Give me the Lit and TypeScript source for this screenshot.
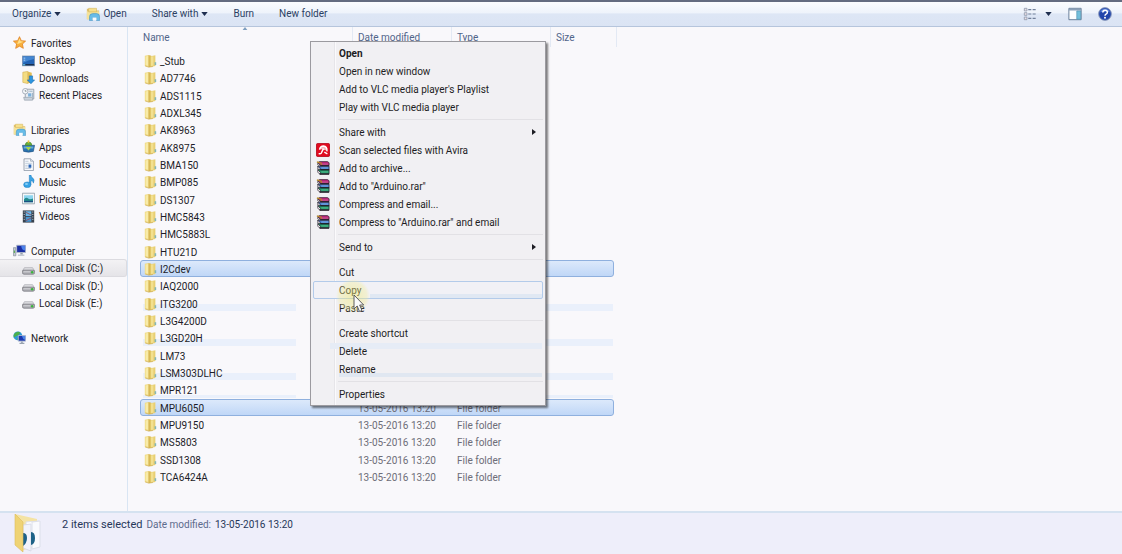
import { LitElement, html, svg, css, nothing, TemplateResult } from "lit";
import { customElement, property, state } from "lit/decorators.js";
import { classMap } from "lit/directives/class-map.js";

const folder = svg`<path d="M1 1.500L6 .5v15l-5-1.500z" fill="#f0da85"/><path d="M2 2.500l3-.8v12l-3-.7z" fill="#f8eba8"/><path d="M5.500 .5l3.500 1v13.500l-3.500 .7z" fill="#d9ba55"/><path d="M8 2l6-1v13l-6 1.500z" fill="#e8cf73"/><path d="M8.500 2.500l3-.5v11.500l-3 .7z" fill="#f2e090"/><path d="M13 9.500h2v3.500h-2z" fill="#86b6b4"/><path d="M1.500 14.200l4.500 1.300 5-.7" stroke="#cdaa4c" stroke-width=".8" fill="none"/>`;
const disk = svg`<path d="M3 7h10l2.500 4H.5z" fill="#e0e0e4" stroke="#9a9aa2" stroke-width=".7"/><rect x=".5" y="10" width="15" height="5" rx="2" fill="#b0b0b6" stroke="#74747c" stroke-width=".9"/><path d="M2 12h8" stroke="#d8d8dc"/><circle cx="12.500" cy="12.500" r="1.500" fill="#39b53c"/>`;
const library = svg`<path d="M1 2h5l1 2h8v10H1z" fill="#dfc070"/><path d="M1 5h14v9H1z" fill="#f4e29a"/><path d="M3 1.500h9v4H3z" fill="#f6e08c" stroke="#d2b055" stroke-width=".6"/><path d="M4 15.500V11q0-3.500 4-3.500h4q3.500 0 3.500 3.500v4.500h-3.500v-3H7.500v3z" fill="#68bce8" stroke="#3a8cc0" stroke-width=".6"/><path d="M7.500 12h4.500v3H7.500z" fill="#f7fbff"/>`;
const books = svg`<g stroke="#231c28" stroke-width=".7"><path d="M2 2l2-1.500h9l2 1.500v3H5z" fill="#b02372"/><path d="M2 2l3 3v1L2 4.500z" fill="#f4f0f4"/><path d="M2 6l3 0h10v4H5z" fill="#3f73c4"/><path d="M2 6l3 3v1.500L2 9z" fill="#f4f0f4"/><path d="M2 10h13v4.500H5z" fill="#1f9466"/><path d="M2 10l3 3v2L2 13z" fill="#f4f0f4"/></g><path d="M6 3.500h8" stroke="#dc6ba8"/><path d="M6 8h8" stroke="#8cc1f0"/><path d="M6 12.500h8" stroke="#62c99a"/><path d="M1 1l5 1.500v2" stroke="#b88b26" stroke-width="1.200" fill="none"/><path d="M5 5.500h10M5 10h10M4 15h11" stroke="#1c1720" stroke-width="1.200"/>`;

const ICONS: Record<string, TemplateResult> = {
  folder, disk, library, books,
  star: svg`<path d="M8 .8l2.200 4.900 5.300.6-3.900 3.600 1.100 5.300L8 12.500l-4.700 2.700 1.100-5.300L.5 6.300l5.300-.6z" fill="#f8b03c" stroke="#e07d1e" stroke-width=".9"/><path d="M8 3l1.300 3.600L13 7.200 9 8.500 5 10z" fill="#ffe08b"/>`,
  desktop: svg`<rect x=".5" y="2.500" width="15" height="12" fill="#2363b4" stroke="#8094ae"/><path d="M1 3h14v3Q8 7 1 11z" fill="#4386d2"/><path d="M1 12.500h14v1.500H1z" fill="#18283f"/><path d="M2 4.500h2v1H2zM2 7h2v1H2z" fill="#cfe5fa"/><path d="M1 12.500h3v1.500H1z" fill="#62c2e6"/>`,
  downloads: svg`<path d="M1 1.500l6-1v15l-6-1.500z" fill="#f3dc82" stroke="#d2ac46" stroke-width=".7"/><path d="M7 .5l5 1.500v12l-5 1.500z" fill="#e2bd55"/><path d="M9 6h4v5h2.500L11 15.700 6.500 11H9z" fill="#2d95e0" stroke="#1668ab" stroke-width=".7"/>`,
  recent: svg`<path d="M4 1.500h10.500v12H4z" fill="#e9edf2" stroke="#8c96a3"/><path d="M2 11.500h11v3.500H3z" fill="#cbd3dc" stroke="#8c96a3" stroke-width=".7"/><circle cx="4" cy="4" r="3.400" fill="#f5f7fa" stroke="#9aa3b0"/><path d="M4 2.500V4h1.500" stroke="#566" fill="none" stroke-width=".8"/><path d="M7.500 6.500h4v4h-4z" fill="#7cb0da"/><path d="M9 4h4M13 6v5" stroke="#8aa5bf"/>`,
  apps: svg`<path d="M.5 6.500h15l-1.500 7.500q-6 2-12 0z" fill="#2b72ae" stroke="#1e4d7d" stroke-width=".7"/><path d="M2 8h12v2.500H2z" fill="#62a9dc"/><path d="M4 6.500q0-4 4-4t4 4z" fill="#6cb33e" stroke="#3d7b24" stroke-width=".7"/><path d="M4.500 8.500h7L8 13z" fill="#a5d64c"/><path d="M7 .5h2v3H7z" fill="#e9c33c"/>`,
  documents: svg`<path d="M2.500 1h8l3.500 3v11.500h-11.500z" fill="#fbfcfe" stroke="#8793a3"/><path d="M10.500 1v3H14" fill="#dbe3ec" stroke="#8793a3" stroke-width=".7"/><path d="M4 4h4M4 6.500h8M4 9h3M4 11h3M4 13h7" stroke="#9fb1c6" stroke-width=".8"/><path d="M8 8h3.500v4H8z" fill="#2b66b6"/>`,
  music: svg`<path d="M9 0h2q0 2.500 2.500 4T14 10q0-3-3-3v5H9z" fill="#3ca3e3" stroke="#1b78bd" stroke-width=".6"/><ellipse cx="6.500" cy="12" rx="4.500" ry="3.500" fill="#36a3e6" stroke="#1b78bd" stroke-width=".6"/><ellipse cx="5.500" cy="11" rx="2" ry="1" fill="#a5dcfa"/>`,
  pictures: svg`<path d="M.5 1.500h15v13H.5z" fill="#f4f6f8" stroke="#8f9ba8"/><path d="M2.500 4h11v8.500h-11z" fill="#8cd4ef"/><path d="M2.500 9q3-3 5-1t6 0v4.500h-11z" fill="#238a8c"/><path d="M2.500 11h11v1.500h-11z" fill="#1b4f83"/>`,
  videos: svg`<path d="M1 .5h14v15H1z" fill="#39414d"/><path d="M4.500 1.500h7v6h-7z" fill="#6ab5e6"/><path d="M4.500 8.500h7v6h-7z" fill="#4b93cc"/><path d="M5 3l6 3M5 13l6-3" stroke="#a34345"/><path d="M2 2.500h1.500M2 5.500h1.500M2 8.500h1.500M2 11.500h1.500M12.500 2.500H14M12.500 5.500H14M12.500 8.500H14M12.500 11.500H14" stroke="#b9c4cf" stroke-width="1.100"/>`,
  computer: svg`<path d="M.5 4.500h3v10h-3z" fill="#c4cad2" stroke="#7d8896" stroke-width=".8"/><path d="M1 8h1.500v3H1z" fill="#5fae5a"/><path d="M4.500 1.500h11v9h-11z" fill="#1b2fa3" stroke="#b7bfca"/><path d="M10 2h5v6q-4 0-5-6z" fill="#4b80ea"/><path d="M9 11h3v2H9z" fill="#98a1ae"/><path d="M6 13h8v1.500H6z" fill="#b5bcc7"/>`,
  network: svg`<circle cx="6" cy="6" r="5.500" fill="#2f9bd6"/><path d="M3 2q4-2 6 0L7 5 4 6 1 8Q0 4 3 2zM5 8l3 2-2 1.500z" fill="#4cb04b"/><path d="M6.500 5.500h9v7h-9z" fill="#1b37b0" stroke="#b9c3d0"/><path d="M11 6h4v5q-3-1-4-5z" fill="#4c83e6"/><path d="M10 13h2v1.500h2V16H8v-1.500h2z" fill="#99a3af"/>`,
  views: svg`<path d="M1.500 1.500h3v3h-3zM1.500 6.500h3v3h-3zM1.500 11.500h3v3h-3z" fill="#eadfe4" stroke="#8c98ab" stroke-width=".9"/><path d="M6 3h3.500M11 3h3.500M6 8h3.500M11 8h3.500M6 13h3.500M11 13h3.500" stroke="#71809a" stroke-width="1.200"/>`,
  pane: svg`<path d="M1 1.500h14v13H1z" fill="#fdfeff" stroke="#58708e"/><path d="M1 2h14v2H1z" fill="#8ba0b8"/><path d="M10 4.500h4.500V14H10z" fill="#73bfdb" stroke="#4a8fb0" stroke-width=".7"/>`,
  help: svg`<circle cx="8" cy="8" r="7.300" fill="#2145ab" stroke="#8d9cba"/><path d="M2.500 6q1-4 5.500-4t5.500 4q-5-2-11 0z" fill="#5c84da"/><path d="M5.500 6.200q0-2.600 2.600-2.600t2.600 2.300q0 1.500-1.500 2.200-1.200.6-1.200 1.900" fill="none" stroke="#fff" stroke-width="1.700"/><circle cx="8" cy="12.300" r="1.100" fill="#fff"/>`,
  avira: svg`<rect x=".5" y=".5" width="15" height="15" rx="1.500" fill="#e10b20" stroke="#b50a1c"/><path d="M4 7.500Q5 3.500 8.500 3.500q4 .5 3.800 5.500-1.500-1.500-3.500-1-2-1.500-4.800-.5z" fill="#f7b4ba"/><path d="M4 7.500Q5 3.500 8.500 3.500q4.500 .5 4 6" fill="none" stroke="#fff" stroke-width="1.600"/><path d="M8.500 6.500L6 11.500q-.7 1-3 .7" stroke="#fff" stroke-width="1.600" fill="none"/><path d="M9.500 10.500l3.500 2" stroke="#fff" stroke-width="1.500"/>`,
};

const icon = (name: string) =>
  html`<svg class="icon" viewBox="0 0 16 16" aria-hidden="true">${ICONS[name]}</svg>`;

const arrow = html`<svg class="caret" viewBox="0 0 8 5" aria-hidden="true"><path d="M0 0h8L4 5z" /></svg>`;

const label = css`.label { padding-top: 2px; }`;

@customElement("command-bar")
class CommandBar extends LitElement {
  static styles = css`
    :host { display: block; }
    .bar {
      display: flex; align-items: center; height: 24px; padding: 0 6px 0 8px;
      border-top: 2px solid #646c80; border-bottom: 1px solid #b6c5dc;
      background: linear-gradient(#fbfcfe, #eef3fb 45%, #dde6f5 50%, #dbe4f4);
    }
    button {
      display: flex; align-items: center; gap: 3px; height: 22px; padding: 0 4px; margin: 0;
      border: 0; background: none; font: 10px/14px Roboto, "Open Sans", sans-serif; color: #2c3f63;
    }
    .group { display: flex; gap: 17px; }
    .tools { display: flex; margin-left: auto; align-items: center; gap: 8px; }
    .views { gap: 8px; }
    .icon { width: 14px; height: 14px; }
    .caret { width: 7px; height: 4px; fill: #1f2f50; }
  `;
  render() {
    return html`<div class="bar" role="toolbar" aria-label="Folder commands">
      <div class="group">
        <button>Organize ${arrow}</button>
        <button>${icon("library")}Open</button>
        <button>Share with ${arrow}</button>
        <button>Burn</button>
        <button>New folder</button>
      </div>
      <div class="tools">
        <button class="views" aria-label="Change your view">${icon("views")}${arrow}</button>
        <button aria-label="Show the preview pane">${icon("pane")}</button>
        <button aria-label="Help">${icon("help")}</button>
      </div>
    </div>`;
  }
}

type NavNode = { label: string; icon: string; children?: NavNode[] };
const NAV: NavNode[] = [
  { label: "Favorites", icon: "star", children: [
    { label: "Desktop", icon: "desktop" }, { label: "Downloads", icon: "downloads" }, { label: "Recent Places", icon: "recent" } ] },
  { label: "Libraries", icon: "library", children: [
    { label: "Apps", icon: "apps" }, { label: "Documents", icon: "documents" }, { label: "Music", icon: "music" },
    { label: "Pictures", icon: "pictures" }, { label: "Videos", icon: "videos" } ] },
  { label: "Computer", icon: "computer", children: [
    { label: "Local Disk (C:)", icon: "disk" }, { label: "Local Disk (D:)", icon: "disk" }, { label: "Local Disk (E:)", icon: "disk" } ] },
  { label: "Network", icon: "network" },
];

@customElement("nav-pane")
class NavPane extends LitElement {
  @property() current = "Local Disk (C:)";
  static styles = [label, css`
    :host { display: block; border-right: 1px solid #d9e5f3; padding-top: 7px; }
    nav { display: grid; grid-auto-rows: 17px 18px 17px; }
    a {
      display: flex; align-items: center; gap: 5px; padding-left: 13px; border: 1px solid transparent;
      border-left: 0; border-radius: 0 3px 3px 0; color: #1d1d28; text-decoration: none; white-space: nowrap;
    }
    .child { padding-left: 22px; gap: 4px; }
    .current { background: linear-gradient(#f3f2f4, #e5e4e8); border-color: #dcdbe0; }
    .icon { width: 13px; height: 13px; flex: none; }
  `];
  private link(n: NavNode, child: boolean) {
    return html`<a href="#" class=${classMap({ child, current: n.label === this.current })}>${icon(n.icon)}<span class="label">${n.label}</span></a>`;
  }
  render() {
    return html`<nav aria-label="Places">
      ${NAV.map((n, i) => html`${i ? html`<span></span>` : nothing}${this.link(n, false)}${(n.children ?? []).map((c) => this.link(c, true))}`)}
    </nav>`;
  }
}

const NAMES = ["_Stub", "AD7746", "ADS1115", "ADXL345", "AK8963", "AK8975", "BMA150", "BMP085", "DS1307", "HMC5843",
  "HMC5883L", "HTU21D", "I2Cdev", "IAQ2000", "ITG3200", "L3G4200D", "L3GD20H", "LM73", "LSM303DLHC", "MPR121",
  "MPU6050", "MPU9150", "MS5803", "SSD1308", "TCA6424A"];
const TRACES = ["ITG3200", "L3GD20H", "LSM303DLHC"];

@customElement("file-list")
class FileList extends LitElement {
  @state() private selected = new Set(["I2Cdev", "MPU6050"]);
  static styles = [label, css`
    :host { display: block; padding-left: 12px; }
    table { display: block; width: 477px; max-width: 100%; }
    thead, tbody, tr { display: grid; }
    tr { grid-template-columns: 213px 99px 99px 1fr; }
    th, td { display: flex; align-items: center; padding: 0; font-weight: 400; text-align: left; white-space: nowrap; }
    th { color: #51658a; height: 20px; padding-left: 5px; border-right: 1px solid #e3e9f4; box-sizing: border-box; }
    .sorted { position: relative; padding-left: 3px; }
    .sorted .caret { position: absolute; top: 0; left: 102px; width: 6px; height: 3px; fill: #7f9fc0; transform: rotate(180deg); }
    tbody { grid-auto-rows: 17px 18px 17px; padding-top: 5px; }
    tbody tr { margin-right: 3px; border: 1px solid transparent; border-radius: 3px; }
    td { color: #6d6d78; padding-left: 4px; }
    .name { color: #1d1d28; padding-left: 3px; gap: 3px; }
    .icon { width: 13px; height: 14px; flex: none; }
    .selected { border-color: #8fb0de; background: linear-gradient(#dce9fb, #c0d7f7); }
    .trace {
      background: linear-gradient(#eaf0fb, #eaf0fb) 2px 100% / 153px 7px no-repeat,
        linear-gradient(#eaf0fb, #eaf0fb) 100% 100% / 80px 7px no-repeat;
    }
    .trace.thin { background-size: 153px 3px, 80px 3px; }
  `];
  render() {
    return html`<table>
      <thead><tr>
        <th class="sorted"><span class="label">Name</span>${arrow}</th>
        ${["Date modified", "Type", "Size"].map((h) => html`<th><span class="label">${h}</span></th>`)}
      </tr></thead>
      <tbody>${NAMES.map((n) => html`<tr class=${classMap({
        selected: this.selected.has(n), trace: TRACES.includes(n) || n === "MPR121", thin: n === "MPR121" })}>
        <td class="name">${icon("folder")}<span class="label">${n}</span></td>
        <td><span class="label">13-05-2016 13:20</span></td>
        <td><span class="label">File folder</span></td><td></td></tr>`)}</tbody>
    </table>`;
  }
}

type Item = { label: string; icon?: string; bold?: boolean; sub?: boolean; hot?: boolean; tint?: string };
const MENU: Item[][] = [
  [{ label: "Open", bold: true }, { label: "Open in new window" }, { label: "Add to VLC media player's Playlist" }, { label: "Play with VLC media player" }],
  [{ label: "Share with", sub: true }, { label: "Scan selected files with Avira", icon: "avira" }, { label: "Add to archive...", icon: "books" },
    { label: 'Add to "Arduino.rar"', icon: "books" }, { label: "Compress and email...", icon: "books" }, { label: 'Compress to "Arduino.rar" and email', icon: "books" }],
  [{ label: "Send to", sub: true }],
  [{ label: "Cut" }, { label: "Copy", hot: true }, { label: "Paste" }],
  [{ label: "Create shortcut" }, { label: "Delete", tint: "high" }, { label: "Rename", tint: "low" }],
  [{ label: "Properties" }],
];

@customElement("context-menu")
class ContextMenu extends LitElement {
  static styles = [label, css`
    :host { display: block; }
    .menu {
      padding: 2px; border: 1px solid #9b9a9f; box-shadow: 2px 2px 2px #00000080;
      background: linear-gradient(90deg, transparent 23px, #e6e5e9 23px, #e6e5e9 24px, #fbfafc 24px, #fbfafc 25px, transparent 25px), #f1f0f3;
    }
    .group + .group { margin-top: 3px; padding-top: 3px; border-top: 1px solid transparent; border-image: linear-gradient(90deg, transparent 26px, #e2e1e5 26px) 1; }
    button {
      display: grid; grid-template-columns: 25px 1fr 6px; align-items: center; width: 100%; height: 18px; margin: 0; padding: 0 4px 0 0;
      border: 1px solid transparent; border-radius: 2px; background: none; font: 10px/14px Roboto, "Open Sans", sans-serif;
      color: #1d1d24; text-align: left; white-space: nowrap;
    }
    .bold { font-weight: 700; }
    .hot { border-color: #b3cbea; background: linear-gradient(#e0e8f3, #e0e8f3) 100% 100% / 172px 4px no-repeat, #f1f1f6; }
    .high { background: linear-gradient(#e6ecf6, #e6ecf6) 100% 0 / 212px 6px no-repeat; }
    .low { background: linear-gradient(#e0e7f1, #e0e7f1) 100% 100% / 203px 4px no-repeat; }
    .icon { width: 14px; height: 14px; margin-left: 2px; }
    .more { width: 4px; height: 6px; fill: #1d1d24; }
  `];
  render() {
    return html`<div class="menu" role="menu">${MENU.map((g) => html`<div class="group" role="group">${g.map((i) => html`
      <button role="menuitem" class="${classMap({ bold: !!i.bold, hot: !!i.hot, high: i.tint === "high", low: i.tint === "low" })}">
        ${i.icon ? icon(i.icon) : html`<span></span>`}<span class="label">${i.label}</span>
        ${i.sub ? html`<svg class="more" viewBox="0 0 4 6" aria-hidden="true"><path d="M0 0l4 3-4 3z" /></svg>` : nothing}
      </button>`)}</div>`)}</div>`;
  }
}

@customElement("details-bar")
class DetailsBar extends LitElement {
  static styles = css`
    :host { display: block; }
    .bar { display: flex; align-items: flex-start; gap: 16px; height: 41px; padding-left: 14px; border-top: 2px solid #d5e2f0; background: #eeeefa; }
    .thumb { width: 32px; height: 40px; }
    p { display: flex; align-items: baseline; gap: 4px; margin: 4px 0 0; color: #5d6b8c; line-height: 16px; white-space: nowrap; }
    .count, .value { color: #263759; }
    .count { font-size: 11px; }
  `;
  render() {
    return html`<footer class="bar">
      <svg class="thumb" viewBox="0 0 32 40" aria-hidden="true">
        <path d="M1 1l22 5v26l-16 6z" fill="#f4e3a4" /><path d="M12 9l13-1v25l-12 2z" fill="#fff" stroke="#dfe1ea" />
        <path d="M9 12l8-1v27l-8-3z" fill="#f1f3fa" stroke="#d9dce8" /><path d="M18 9l8-1v26l-8 2z" fill="#f9fafd" stroke="#dcdfe9" />
        <path d="M9 20q4 0 4 5t-4 8z" fill="#1e6287" /><path d="M17 19q4 0 4 6t-4 7z" fill="#1e6287" />
        <path d="M1 1l8 8v30l-8-7z" fill="#efd374" stroke="#dcbc5c" stroke-width=".6" />
      </svg>
      <p><span class="count">2 items selected</span><span>Date modified:</span><span class="value">13-05-2016 13:20</span></p>
    </footer>`;
  }
}

@customElement("app-root")
class AppRoot extends LitElement {
  static styles = css`
    :host {
      display: grid; grid-template-rows: auto 1fr auto; position: relative; min-height: 100vh; overflow: hidden;
      background: #f9f8fb; color: #1d1d28; font: 10px/14px Roboto, "Open Sans", sans-serif;
    }
    main { display: grid; grid-template-columns: 128px 1fr; }
    .popup { position: absolute; top: 41px; left: 310px; width: 236px; }
    .pointer { position: absolute; top: 279px; left: 336px; width: 34px; height: 34px; pointer-events: none; }
  `;
  render() {
    return html`<command-bar></command-bar>
      <main><nav-pane></nav-pane><file-list></file-list></main>
      <details-bar></details-bar>
      <context-menu class="popup"></context-menu>
      <svg class="pointer" viewBox="0 0 34 34" aria-hidden="true">
        <defs><radialGradient id="glow"><stop offset="0" stop-color="#f0e860" stop-opacity=".45" /><stop offset=".8" stop-color="#f2ec90" stop-opacity=".35" /><stop offset="1" stop-color="#f2ec90" stop-opacity="0" /></radialGradient></defs>
        <circle cx="17" cy="17" r="17" fill="url(#glow)" />
        <path d="M18 16v14l3.200-3 2.300 5.500 2.500-1-2.300-5.500h4z" fill="#fafafa" stroke="#4c4c50" stroke-width=".9" />
      </svg>`;
  }
}
